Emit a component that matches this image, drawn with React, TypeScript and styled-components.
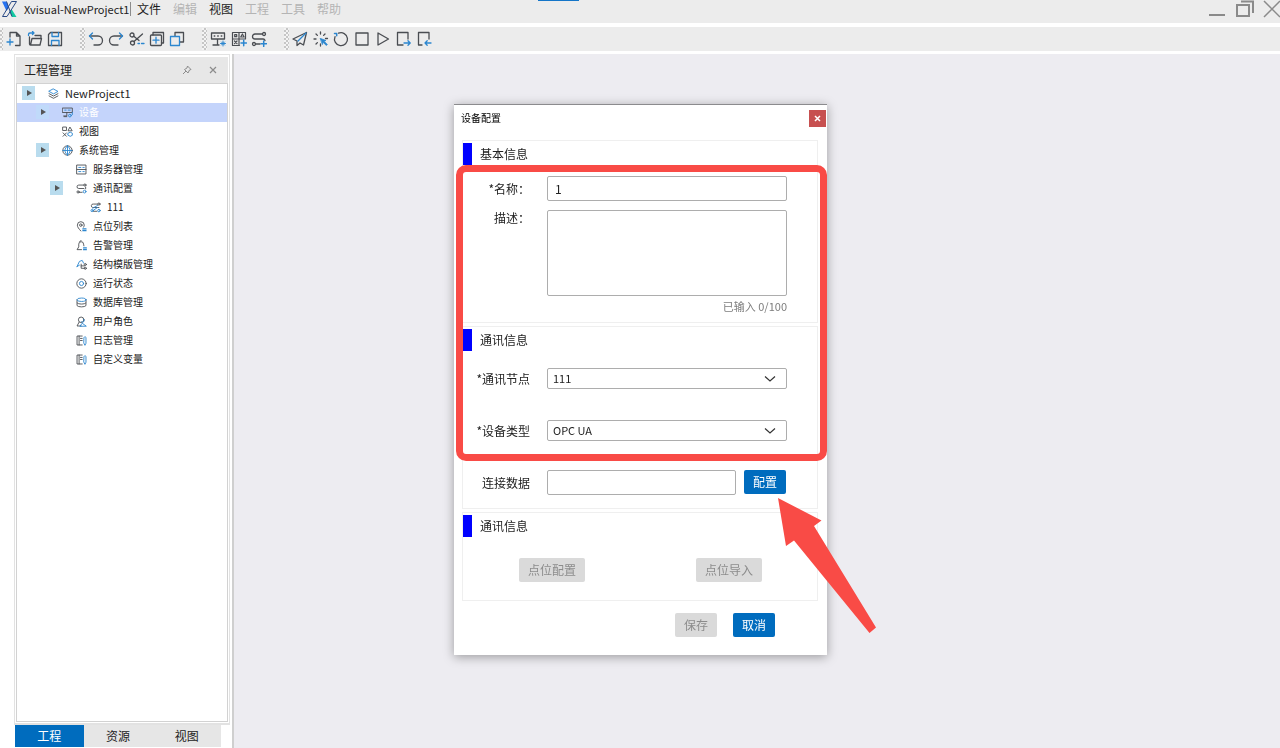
import React from 'react';
import styled, { createGlobalStyle, css } from 'styled-components';

const GlobalStyle = createGlobalStyle`
  *, *::before, *::after { box-sizing: border-box; }
  body {
    margin: 0;
    background: #ffffff;
    color: #222222;
    font-family: "Noto Sans CJK SC", "Open Sans", sans-serif;
    font-size: 12px;
    line-height: 16px;
  }
  button, input, select, textarea { font: inherit; color: inherit; margin: 0; }
  button { padding: 0; border: 0; background: none; }
`;

const DARK = '#4a4d52';
const BLUE = '#2b86cf';

const Page = styled.div`
  display: flex;
  flex-direction: column;
  min-height: 100vh;
  position: relative;
`;

const TitleBar = styled.header`
  display: flex;
  align-items: center;
  height: 23px;
  padding: 0 0 5px 1px;
  background: #ececec;
  overflow: hidden;
`;

const AppTitle = styled.span`
  min-width: 107px;
  margin-left: 6px;
  border-right: 1px solid #8c8c8c;
  font-size: 11px;
  line-height: 14px;
  white-space: nowrap;
`;

const Menu = styled.nav`
  display: flex;
  gap: 12px;
  margin-left: 6px;
`;

const MenuItem = styled.button`
  color: #1c1c1c;
  white-space: nowrap;
  &:disabled { color: #b4b4b4; }
`;

const WindowControls = styled.div`
  display: flex;
  gap: 9px;
  margin-left: auto;
  margin-right: -1px;
`;

const WindowButton = styled.button`
  display: flex;
  width: 18px;
  height: 18px;
`;

const LoadingMark = styled.div`
  position: absolute;
  top: 0;
  left: 42%;
  width: 41px;
  height: 1px;
  background: #1475c8;
`;

const Toolbar = styled.div`
  display: flex;
  align-items: center;
  height: 24px;
  margin: 4px 0 3px;
  background: #ececec;
`;

const Grip = styled.span<{ $edge?: boolean }>`
  width: ${p => (p.$edge ? 3 : 5)}px;
  height: 22px;
  margin: ${p => (p.$edge ? '0 1px 0 0' : '0 1px 0 15px')};
  background-image: repeating-conic-gradient(#c6c6c6 0 25%, #f4f4f4 0 50%);
  background-size: 4px 4px;
`;

const ToolGroup = styled.div<{ $width: number }>`
  display: flex;
  justify-content: space-between;
  width: ${p => p.$width}px;
`;

const ToolButton = styled.button`
  display: flex;
  align-items: center;
  justify-content: center;
  width: 20px;
  height: 22px;
`;

const Body = styled.div`
  display: flex;
  flex: 1;
`;

const Sidebar = styled.aside`
  display: flex;
  flex-direction: column;
  width: 216px;
  margin-left: 14px;
  padding-bottom: 1px;
`;

const Panel = styled.section`
  display: flex;
  flex-direction: column;
  flex: 1;
  padding: 2px 1px 1px;
  border: 1px solid #e2e2e2;
  border-bottom: 2px solid #e2e2e2;
`;

const PanelHeader = styled.div`
  display: flex;
  align-items: center;
  height: 26px;
  padding: 0 10px 0 8px;
  background: #e7e7e7;
`;

const PanelTitle = styled.h2`
  flex: 1;
  margin: 0;
  font-size: 12px;
  font-weight: 400;
`;

const PanelButton = styled.button`
  display: flex;
  margin-left: 16px;
`;

const Tree = styled.ul`
  flex: 1;
  margin: 0;
  padding: 0;
  list-style: none;
  border: 1px solid #d2d2d2;
`;

const TreeRow = styled.li<{ $level: number; $selected?: boolean }>`
  display: flex;
  align-items: center;
  height: 19px;
  padding: 0 0 1px ${p => 5 + p.$level * 14}px;
  font-size: ${p => (p.$level === 0 ? 11 : 10)}px;
  white-space: nowrap;
  ${p => p.$selected && css`
    background: #c4d4fb;
    color: #ffffff;
  `}
`;

const Toggle = styled.button<{ $faint?: boolean }>`
  display: flex;
  align-items: center;
  justify-content: center;
  width: 13px;
  height: 14px;
  background: ${p => (p.$faint ? '#c0dafa' : '#b9dcee')};
`;

const ToggleSpace = styled.span`
  width: 13px;
`;

const TreeIcon = styled.span`
  display: flex;
  margin: 0 6px 0 13px;
`;

const Tabs = styled.div`
  display: grid;
  grid-template-columns: repeat(3, 1fr);
  height: 22px;
  margin: 0 9px 0 1px;
  background: #e6e6e6;
`;

const Tab = styled.button<{ $active?: boolean }>`
  background: ${p => (p.$active ? '#006cbe' : 'transparent')};
  color: ${p => (p.$active ? '#ffffff' : '#222222')};
`;

const Splitter = styled.div`
  width: 2px;
  margin-left: 2px;
  background: #cfcfcf;
`;

const Workspace = styled.main`
  flex: 1;
  background: #edecf1;
`;

const Overlay = styled.div`
  position: fixed;
  inset: 0;
  display: flex;
  align-items: center;
  justify-content: center;
  padding: 10px 0 0 1px;
`;

const Dialog = styled.section`
  position: relative;
  width: 373px;
  padding: 0 9px 18px 8px;
  border-top: 1px solid #8b8b8e;
  background: #ffffff;
  box-shadow: 0 2px 10px rgba(0, 0, 0, 0.35);
`;

const DialogHeader = styled.div`
  display: flex;
  justify-content: space-between;
  margin: 0 -8px 0 -1px;
  padding-top: 5px;
  height: 35px;
`;

const DialogTitle = styled.h1`
  margin: 0;
  font-size: 10px;
  font-weight: 400;
  color: #000000;
`;

const CloseButton = styled.button`
  display: flex;
  align-items: center;
  justify-content: center;
  width: 17px;
  height: 17px;
  background: #c75050;
`;

const Group = styled.section`
  margin-bottom: 3px;
  padding: 2px 30px 0 0;
  border: 1px solid #efefef;
`;

const GroupTitle = styled.h2`
  display: flex;
  align-items: center;
  height: 22px;
  margin: 0;
  padding-left: 8px;
  border-left: 9px solid #0000ff;
  font-size: 12px;
  font-weight: 400;
`;

const Field = styled.div<{ $top: number }>`
  display: flex;
  align-items: flex-start;
  margin-top: ${p => p.$top}px;
`;

const FieldLabel = styled.label<{ $height: number }>`
  width: 67px;
  margin-right: 17px;
  line-height: ${p => p.$height}px;
  text-align: right;
  white-space: nowrap;
`;

const controlBox = css`
  flex: 1;
  min-width: 0;
  border: 1px solid #adadad;
  border-radius: 2px;
  background: #ffffff;
  outline: none;
`;

const TextInput = styled.input`
  ${controlBox}
  height: 25px;
  padding: 0 7px;
`;

const TextArea = styled.textarea`
  ${controlBox}
  height: 86px;
  padding: 4px 7px;
  resize: none;
`;

const SelectWrap = styled.div`
  position: relative;
  display: flex;
  flex: 1;
`;

const Select = styled.select`
  ${controlBox}
  height: 21px;
  padding: 0 24px 0 5px;
  font-size: 11px;
  line-height: 16px;
  appearance: none;
`;

const SelectArrow = styled.svg`
  position: absolute;
  top: 7px;
  right: 11px;
  pointer-events: none;
`;

const Counter = styled.p`
  margin: 2px 0 8px;
  color: #7d7d7d;
  font-size: 11px;
  text-align: right;
`;

const Button = styled.button<{ $wide?: boolean }>`
  width: ${p => (p.$wide ? 66 : 42)}px;
  height: 24px;
  border-radius: 2px;
  background: #006cbe;
  color: #ffffff;
  white-space: nowrap;
  &:disabled { background: #dadada; color: #8c8c8c; }
`;

const ConnectRow = styled(Field)`
  margin-bottom: 13px;
  ${Button} { margin: 0 1px 0 8px; }
`;

const PointActions = styled.div`
  display: flex;
  justify-content: space-between;
  padding: 21px 25px 18px 56px;
`;

const DialogActions = styled.div`
  display: flex;
  justify-content: flex-end;
  gap: 16px;
  padding: 9px 43px 0 0;
`;

const Highlight = styled.div`
  position: absolute;
  top: 60px;
  left: 2px;
  right: 0;
  height: 296px;
  border: 7px solid #f94b46;
  border-radius: 10px;
  pointer-events: none;
`;

const Pointer = styled.svg`
  position: absolute;
  top: 393px;
  left: 324px;
  pointer-events: none;
`;

function Icon({ size = 16, children }: { size?: number; children: React.ReactNode }) {
  return (
    <svg width={size} height={size} viewBox="0 0 16 16" fill="none" stroke={DARK} strokeWidth="1.3" strokeLinejoin="round" strokeLinecap="round" aria-hidden="true">
      {children}
    </svg>
  );
}

const icons: Record<string, React.ReactNode> = {
  newFile: <><path d="M4 6V1.500h6.500L14 5v9.500H9.500M10.500 1.500V5H14" /><path d="M1 11h6M4 8v6" stroke={BLUE} /></>,
  open: <><path d="M2.500 6v7a1 1 0 0 0 1 1h9.500l1.500-6.500H5L3.500 14M8 4.500h6v3" /><path d="M1.500 4.500V3.500a1.500 1.500 0 0 1 1.500-1.500h4M5.500 .500L7 2 5.500 3.500" stroke={BLUE} /></>,
  save: <><path d="M3.500 1.500h11v13h-13v-11z" /><path d="M5 1.500v4h6.500v-4M4.500 14.500v-5h7.500v5" stroke={BLUE} /></>,
  undo: <><path d="M1.500 5H10a4.500 4.500 0 0 1 0 9H6" /><path d="M4.500 2l-3 3 3 3" stroke={BLUE} /></>,
  redo: <><path d="M14.500 5H6a4.500 4.500 0 0 0 0 9h4" /><path d="M11.500 2l3 3-3 3" stroke={BLUE} /></>,
  cut: <><circle cx="3" cy="4" r="2" /><circle cx="3.500" cy="12" r="2" /><path d="M4.800 5.200L10 9.500M5 10.500L13.500 3" /><path d="M9 12.500h1.500M12.500 12.500H15" stroke={BLUE} /></>,
  copyAdd: <><rect x="1.500" y="4" width="11" height="10.500" rx="1" /><path d="M4 4V1.500h10.500V12h-2" /><path d="M4 9.200h6M7 6.200v6" stroke={BLUE} /></>,
  paste: <><path d="M6 5V1.500h8.500V11H11" /><rect x="1.500" y="5.500" width="9" height="9" stroke={BLUE} /></>,
  device: <><path d="M1.500 2h13v6h-13zM7.500 8v6M3 14h6M4.200 5h.600M7.700 5h.600M11.200 5h.600" /><path d="M10.500 12.500h5M13 10v5M11.500 11l3 3M14.500 11l-3 3" stroke={BLUE} strokeWidth="1" /></>,
  viewAdd: <><path d="M8.500 14.500H1.500v-13h13V8M8 1.500v13M1.500 8h13M3.700 3.700h2v2h-2zM3.500 10l2.500 2.700M6 10l-2.500 2.700M9.700 6l1.700-3 1.700 3z" strokeWidth="1.200" /><path d="M10 12h5.500M12.700 9.200v5.600" stroke={BLUE} strokeWidth="1.500" /></>,
  linkAdd: <><circle cx="13" cy="3" r="1.500" /><circle cx="3" cy="13" r="1.500" /><path d="M11.500 3H4a2.500 2.500 0 0 0 0 5h8a2 2 0 0 1 2 1.500M4.500 13H9" /><path d="M10 12.700h5.500M12.700 10v5.500" stroke={BLUE} strokeWidth="1.500" /></>,
  send: <><path d="M14.500 1.500L1 8l4 2v4.500l3-2.500 3.500 2z" /><path d="M14 2L6 10" stroke={BLUE} /></>,
  burst: <><path d="M7.500 1v2M3 3l1.400 1.400M1 8h2M12 3l-1.400 1.400M3 13l1.400-1.400M7.500 13V15M12.500 7.500h2" /><path d="M7.500 7.500l5.500 2-2 .700 3.300 3.300-1 1-3.300-3.300-.500 2z" fill={BLUE} stroke={BLUE} strokeWidth=".800" /></>,
  restart: <><path d="M5.500 2.200a6.500 6.500 0 1 1-3.500 3.500" /><path d="M1.500 2.500h2.200v2.200" stroke={BLUE} strokeWidth="1.500" /></>,
  stop: <rect x="2" y="2" width="12" height="12" />,
  play: <path d="M3 2l10.500 6L3 14z" />,
  exportBox: <><path d="M8 14H2.500V1.500h10.500V8" /><path d="M9 12h6M13 9.800l2.200 2.200L13 14.200" stroke={BLUE} /></>,
  importBox: <><path d="M6 14H2.500V1.500h10.500V8" /><path d="M15 12H9M11.200 9.800L9 12l2.200 2.200" stroke={BLUE} /></>,
  layers: <><path d="M8 1.500l6.500 3.500L8 8.500 1.500 5z" stroke={BLUE} /><path d="M1.500 8.200L8 11.700l6.500-3.500M1.500 11.500L8 15l6.500-3.500" /></>,
  deviceNode: <><path d="M1 1.500h14v6.500H1zM7 8v5H2.500M7 14H3" /><path d="M4 4.500h2M9 4.500h3M15 8v3" stroke={BLUE} /><circle cx="11.500" cy="12.500" r="2" stroke={BLUE} /></>,
  shapes: <><path d="M1.500 1.500h5v5h-5zM1.500 10l5 5M6.500 10l-5 5M9 6.500l2.500-5 3 5z" /><path d="M9 10.500l3-1.500 3 1.500v3L12 15l-3-1.500z" stroke={BLUE} /></>,
  globe: <><circle cx="8" cy="8" r="6.800" /><path d="M8 1.200v13.600M1.200 8h13.600M8 1.200c-5 4-5 9.600 0 13.600M8 1.200c5 4 5 9.600 0 13.600" stroke={BLUE} /></>,
  server: <><rect x="1.500" y="1.500" width="13" height="13" /><path d="M1.500 8h13" /><path d="M4 5h3M10 5h2M4 11h3M10 11h2" stroke={BLUE} /></>,
  link: <><circle cx="13" cy="3" r="1.600" /><path d="M11.400 3H4a2.500 2.500 0 0 0 0 5h7.500M4.600 13.500H9M14 6v2.500" /><circle cx="3" cy="13" r="1.600" /><circle cx="12.500" cy="12.500" r="2" stroke={BLUE} /></>,
  linkLeaf: <><circle cx="13" cy="3" r="1.600" /><path d="M11.400 3H5a2.500 2.500 0 0 0-1 5h9M5 13.500H10" /><path d="M4 9l7-4M5 12l6-4" stroke={BLUE} /><circle cx="3" cy="12.500" r="1.600" stroke={BLUE} /><circle cx="13" cy="12.500" r="1.800" stroke={BLUE} /></>,
  pin: <><path d="M7 14.500C4 11 2 9 2 6a5 5 0 0 1 10 0c0 1-.500 2-1 3" /><circle cx="7" cy="6" r="1.800" /><path d="M10 11.500h4.500M10 14h4.500" stroke={BLUE} strokeWidth="2" /></>,
  alarm: <><path d="M8 14H1.500L4 10V6a3.500 3.500 0 0 1 7 0l.500 2.500M5.500 2L7.500 .800" /><path d="M11 11.500h4M11 14h4" stroke={BLUE} strokeWidth="2" /></>,
  struct: <><path d="M1.500 11L5 3.500 9 2l2 4M1.500 11L5 9" stroke={BLUE} /><path d="M7.500 7.500v6h5M7.500 10h5" /><circle cx="13.500" cy="8" r="1.500" /><circle cx="13.500" cy="13.500" r="1.500" /></>,
  target: <><circle cx="8" cy="8" r="6.800" /><circle cx="8" cy="8" r="3" stroke={BLUE} /></>,
  database: <><path d="M1.500 4v8.500C3 15 13 15 14.500 12.500V4M1.500 8.500C3 11 13 11 14.500 8.500" /><ellipse cx="8" cy="4" rx="6.500" ry="2.500" stroke={BLUE} /></>,
  user: <><circle cx="7.500" cy="5.500" r="4" /><path d="M4.500 9L1.500 14.500h6" /><path d="M6 14.500l3-4 5.500 4zM8 8.500a2.500 2.500 0 1 0 3-4" stroke={BLUE} /></>,
  log: <><path d="M9 14.500H1.500v-13H9M4.500 1.500v13M6.500 5H9M6.500 8H9" /><path d="M11.500 4c0-2 3-2 3 0v8L13 15l-1.500-3z" stroke={BLUE} /></>,
};

const menus = [
  ['文件', true], ['编辑', false], ['视图', true], ['工程', false], ['工具', false], ['帮助', false],
] as const;

const toolGroups = [
  { width: 61, tools: [['newFile', '新建'], ['open', '打开'], ['save', '保存']] },
  { width: 101, tools: [['undo', '撤销'], ['redo', '重做'], ['cut', '剪切'], ['copyAdd', '复制'], ['paste', '粘贴']] },
  { width: 61, tools: [['device', '添加设备'], ['viewAdd', '添加视图'], ['linkAdd', '添加通讯']] },
  { width: 144, tools: [['send', '发布'], ['burst', '生成'], ['restart', '重启'], ['stop', '停止'], ['play', '运行'], ['exportBox', '导出'], ['importBox', '导入']] },
];

interface TreeNode { label: string; icon: string; level: number; toggle?: boolean; selected?: boolean }

const nodes: TreeNode[] = [
  { label: 'NewProject1', icon: 'layers', level: 0, toggle: true },
  { label: '设备', icon: 'deviceNode', level: 1, toggle: true, selected: true },
  { label: '视图', icon: 'shapes', level: 1 },
  { label: '系统管理', icon: 'globe', level: 1, toggle: true },
  { label: '服务器管理', icon: 'server', level: 2 },
  { label: '通讯配置', icon: 'link', level: 2, toggle: true },
  { label: '111', icon: 'linkLeaf', level: 3 },
  { label: '点位列表', icon: 'pin', level: 2 },
  { label: '告警管理', icon: 'alarm', level: 2 },
  { label: '结构模版管理', icon: 'struct', level: 2 },
  { label: '运行状态', icon: 'target', level: 2 },
  { label: '数据库管理', icon: 'database', level: 2 },
  { label: '用户角色', icon: 'user', level: 2 },
  { label: '日志管理', icon: 'log', level: 2 },
  { label: '自定义变量', icon: 'log', level: 2 },
];

function Logo() {
  return (
    <svg width="17" height="18" viewBox="0 0 17 18" aria-hidden="true">
      <path d="M1 1.500h4.500L8 7.500 5.500 11z" fill="#2672f0" />
      <path d="M10.500 9l5 8h-4.500L8.500 12z" fill="#12c8a0" />
      <path d="M10.500 1.500h5L6 16.500H1.500zM5.500 1.500l5.500 15" fill="none" stroke="#2a4a86" strokeWidth="1" />
    </svg>
  );
}

function DropDown({ id, value }: { id: string; value: string }) {
  return (
    <SelectWrap>
      <Select id={id} defaultValue={value}><option>{value}</option></Select>
      <SelectArrow width="12" height="8" viewBox="0 0 12 8" fill="none" stroke="#333333" strokeWidth="1.200" aria-hidden="true">
        <path d="M1 1.500l5 4.500 5-4.500" />
      </SelectArrow>
    </SelectWrap>
  );
}

export default function App() {
  return (
    <Page>
      <GlobalStyle />
      <TitleBar>
        <Logo />
        <AppTitle>Xvisual-NewProject1</AppTitle>
        <Menu>
          {menus.map(([label, enabled]) => <MenuItem key={label} disabled={!enabled}>{label}</MenuItem>)}
        </Menu>
        <WindowControls>
          <WindowButton aria-label="最小化">
            <svg width="18" height="18" viewBox="0 0 18 18" stroke="#8a8a8a" strokeWidth="2"><path d="M0 15h16" /></svg>
          </WindowButton>
          <WindowButton aria-label="还原">
            <svg width="18" height="18" viewBox="0 0 18 18" fill="none" stroke="#8a8a8a" strokeWidth="2"><path d="M1 5h12v11H1zM5 1.500h12V13" /></svg>
          </WindowButton>
          <WindowButton aria-label="关闭">
            <svg width="18" height="18" viewBox="0 0 18 18" stroke="#8a8a8a" strokeWidth="1.500"><path d="M1 1l16 16M17 1L1 17" /></svg>
          </WindowButton>
        </WindowControls>
      </TitleBar>
      <LoadingMark />
      <Toolbar>
        {toolGroups.map((group, index) => (
          <React.Fragment key={group.tools[0][0]}>
            <Grip $edge={index === 0} />
            <ToolGroup $width={group.width}>
              {group.tools.map(([name, label]) => (
                <ToolButton key={name} aria-label={label}><Icon>{icons[name]}</Icon></ToolButton>
              ))}
            </ToolGroup>
          </React.Fragment>
        ))}
      </Toolbar>
      <Body>
        <Sidebar>
          <Panel>
            <PanelHeader>
              <PanelTitle>工程管理</PanelTitle>
              <PanelButton aria-label="固定">
                <svg width="10" height="10" viewBox="0 0 10 10" fill="none" stroke="#8c8c8c"><path d="M5.500 1L9 4.500 7.500 5 6 8 2.500 4.500 5 3zM4 6L1 9" /></svg>
              </PanelButton>
              <PanelButton aria-label="关闭面板">
                <svg width="10" height="10" viewBox="0 0 10 10" stroke="#8c8c8c" strokeWidth="1.200"><path d="M2 2l6 6M8 2L2 8" /></svg>
              </PanelButton>
            </PanelHeader>
            <Tree>
              {nodes.map(node => (
                <TreeRow key={node.label} $level={node.level} $selected={node.selected}>
                  {node.toggle ? (
                    <Toggle $faint={node.selected} aria-label={`展开 ${node.label}`}>
                      <svg width="6" height="6" viewBox="0 0 6 6" fill="#555555"><path d="M1 0l5 3-5 3z" /></svg>
                    </Toggle>
                  ) : <ToggleSpace />}
                  <TreeIcon><Icon size={11}>{icons[node.icon]}</Icon></TreeIcon>
                  {node.label}
                </TreeRow>
              ))}
            </Tree>
          </Panel>
          <Tabs>
            <Tab $active>工程</Tab>
            <Tab>资源</Tab>
            <Tab>视图</Tab>
          </Tabs>
        </Sidebar>
        <Splitter />
        <Workspace />
      </Body>
      <Overlay>
        <Dialog role="dialog" aria-labelledby="dialog-title">
          <DialogHeader>
            <DialogTitle id="dialog-title">设备配置</DialogTitle>
            <CloseButton aria-label="关闭">
              <svg width="7" height="7" viewBox="0 0 7 7" stroke="#ffffff" strokeWidth="1.500"><path d="M1 1l5 5M6 1L1 6" /></svg>
            </CloseButton>
          </DialogHeader>
          <Group>
            <GroupTitle>基本信息</GroupTitle>
            <Field $top={11}>
              <FieldLabel $height={25} htmlFor="name">*名称：</FieldLabel>
              <TextInput id="name" defaultValue="1" />
            </Field>
            <Field $top={9}>
              <FieldLabel $height={16} htmlFor="description">描述：</FieldLabel>
              <TextArea id="description" />
            </Field>
            <Counter>已输入 0/100</Counter>
          </Group>
          <Group>
            <GroupTitle>通讯信息</GroupTitle>
            <Field $top={17}>
              <FieldLabel $height={21} htmlFor="node">*通讯节点</FieldLabel>
              <DropDown id="node" value="111" />
            </Field>
            <Field $top={31}>
              <FieldLabel $height={21} htmlFor="type">*设备类型</FieldLabel>
              <DropDown id="type" value="OPC UA" />
            </Field>
            <ConnectRow $top={29}>
              <FieldLabel $height={25} htmlFor="connection">连接数据</FieldLabel>
              <TextInput id="connection" />
              <Button>配置</Button>
            </ConnectRow>
          </Group>
          <Group>
            <GroupTitle>通讯信息</GroupTitle>
            <PointActions>
              <Button $wide disabled>点位配置</Button>
              <Button $wide disabled>点位导入</Button>
            </PointActions>
          </Group>
          <DialogActions>
            <Button disabled>保存</Button>
            <Button>取消</Button>
          </DialogActions>
          <Highlight />
          <Pointer width="100" height="138" viewBox="0 0 100 138" fill="#f94b46" aria-hidden="true">
            <path d="M0 0L43.500 22.500 36 28 98 129.500 91.500 135 16 42.500 8 48z" />
          </Pointer>
        </Dialog>
      </Overlay>
    </Page>
  );
}
